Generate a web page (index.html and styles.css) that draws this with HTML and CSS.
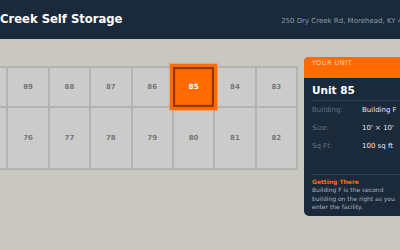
FILE: index.html
```html
<!DOCTYPE html>
<html>
<head>
<meta charset="utf-8">
<link rel="stylesheet" href="styles.css">
</head>
<body>
<div class="page">
  <header class="topbar">
    <div class="brand">Dry Creek Self Storage</div>
    <div class="address">250 Dry Creek Rd, Morehead, KY 40351</div>
  </header>
  <main class="main">
    <div class="units">
      <div class="unit">90</div>
      <div class="unit">89</div>
      <div class="unit">88</div>
      <div class="unit">87</div>
      <div class="unit">86</div>
      <div class="unit selected">85</div>
      <div class="unit">84</div>
      <div class="unit">83</div>
      <div class="unit">75</div>
      <div class="unit">76</div>
      <div class="unit">77</div>
      <div class="unit">78</div>
      <div class="unit">79</div>
      <div class="unit">80</div>
      <div class="unit">81</div>
      <div class="unit">82</div>
    </div>
    <aside class="panel">
      <div class="panel-head">YOUR UNIT</div>
      <div class="panel-title">Unit 85</div>
      <div class="details">
        <div class="row"><span class="label">Building:</span><span class="value">Building F</span></div>
        <div class="row"><span class="label">Size:</span><span class="value">10' × 10'</span></div>
        <div class="row"><span class="label">Sq Ft:</span><span class="value">100 sq ft</span></div>
      </div>
      <div class="directions">
        <div class="dir-title">Getting There</div>
        <div class="dir-text">Building F is the second building on the right as you enter the facility.</div>
      </div>
    </aside>
  </main>
</div>
</body>
</html>
```
FILE: styles.css
```css
html, body {
  margin: 0;
  padding: 0;
  background: #c8c8c0;
  overflow: hidden;
  font-family: "DejaVu Sans", sans-serif;
}
.page {
  width: 460px;
  margin-left: -35px;
}
.topbar {
  box-sizing: border-box;
  height: 39px;
  background: #1b2a3b;
  display: flex;
  justify-content: space-between;
  align-items: baseline;
  padding: 12px 5px 0 8px;
}
.brand {
  color: #ffffff;
  font-weight: bold;
  font-size: 11.6px;
  line-height: 15px;
}
.address {
  color: #8e9cae;
  font-size: 7px;
  line-height: 15px;
}
.main {
  display: flex;
  align-items: flex-start;
  gap: 6px;
  padding-top: 18px;
}
.units {
  margin-top: 9px;
  width: 333px;
  box-sizing: border-box;
  padding: 2px;
  background: #b3b3b3;
  display: grid;
  grid-template-columns: repeat(8, 1fr);
  grid-template-rows: 38px 60px;
  gap: 2px;
}
.unit {
  background: #cbcbcb;
  color: #777777;
  font-weight: bold;
  font-size: 7px;
  display: flex;
  align-items: center;
  justify-content: center;
}
.unit.selected {
  background: #ff6b00;
  color: #ffffff;
  border: 2px solid #8f3400;
  box-sizing: border-box;
  transform: scale(1.05);
  box-shadow: 0 0 0 3px #ff6b00, 0 0 1px 4px rgba(255, 140, 60, 0.5);
  position: relative;
  z-index: 1;
}
.panel {
  width: 108px;
  flex: none;
  background: #1b2a3b;
  border-radius: 5px;
  overflow: hidden;
}
.panel-head {
  background: #ff6b00;
  color: #ffd3b3;
  font-size: 6.5px;
  letter-spacing: 0.5px;
  line-height: 8px;
  padding: 2px 8px 11px;
}
.panel-title {
  color: #ffffff;
  font-weight: bold;
  font-size: 10.5px;
  line-height: 12px;
  padding: 6px 8px 4px;
}
.details {
  margin: 0 8px;
  border-top: 1px solid #2d3c4e;
  padding-bottom: 19px;
}
.row {
  display: flex;
  height: 18px;
  align-items: center;
  font-size: 7px;
  white-space: nowrap;
}
.label {
  width: 50px;
  flex: none;
  color: #607287;
}
.value {
  color: #e2e7ee;
}
.directions {
  margin: 0 8px;
  border-top: 1px solid #2d3c4e;
  padding: 3px 0 4px;
}
.dir-title {
  color: #f07016;
  font-weight: bold;
  font-size: 6px;
  line-height: 8px;
}
.dir-text {
  color: #aab3bf;
  font-size: 6px;
  line-height: 8.6px;
}
```
